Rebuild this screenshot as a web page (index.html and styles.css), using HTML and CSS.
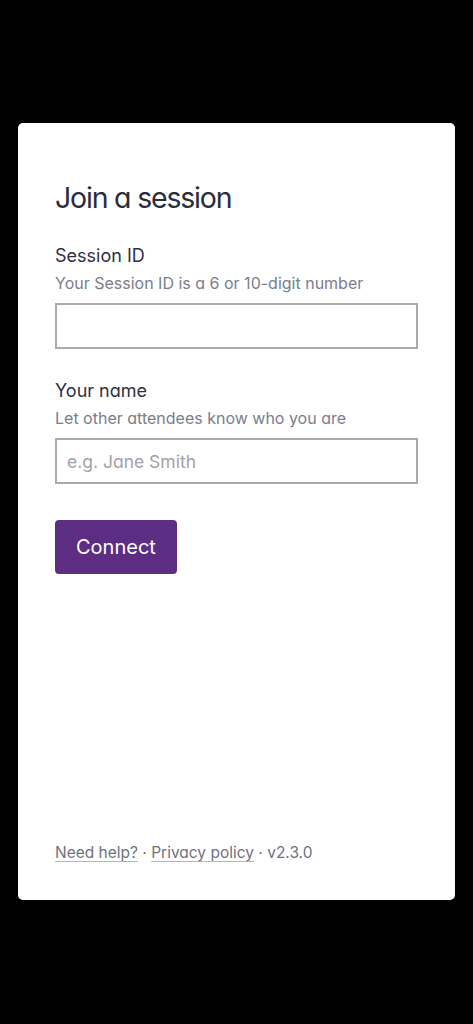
FILE: index.html
```html
<!DOCTYPE html>
<html lang="en">
<head>
<meta charset="utf-8">
<meta name="viewport" content="width=device-width, initial-scale=1">
<title>Join a session</title>
<link rel="stylesheet" href="styles.css">
</head>
<body>
<main class="card">
  <h1 class="title">Join a session</h1>
  <div class="field">
    <label class="label" for="sid">Session ID</label>
    <p class="hint">Your Session ID is a 6 or 10-digit number</p>
    <input class="input" id="sid" type="text">
  </div>
  <div class="field">
    <label class="label" for="name">Your name</label>
    <p class="hint">Let other attendees know who you are</p>
    <input class="input" id="name" type="text" placeholder="e.g. Jane Smith">
  </div>
  <button class="btn" type="button">Connect</button>
  <footer class="footer">
    <a href="#" class="link">Need help?</a> · <a href="#" class="link">Privacy policy</a> · v2.3.0
  </footer>
</main>
</body>
</html>
```

FILE: styles.css
```css
html, body {
  margin: 0;
  background: #000;
}
body {
  padding: 123px 18px 0;
  font-family: Inter, "Noto Sans", sans-serif;
  font-feature-settings: "cv11" 1;
}
.card {
  box-sizing: border-box;
  height: 777px;
  background: #fff;
  border-radius: 5px;
  padding: 57px 37px 36px;
  display: flex;
  flex-direction: column;
  align-items: flex-start;
}
.title {
  margin: 0;
  font-size: 28.5px;
  line-height: 36px;
  font-weight: 400;
  letter-spacing: -1.2px;
  color: #2b2d3b;
}
.field {
  align-self: stretch;
  display: flex;
  flex-direction: column;
  margin-top: 28px;
}
.field + .field {
  margin-top: 30px;
}
.label {
  font-size: 18px;
  line-height: 24px;
  color: #2f3140;
}
.hint {
  margin: 5px 0 10px;
  font-size: 16px;
  line-height: 20px;
  color: #7b7d8a;
}
.input {
  box-sizing: border-box;
  height: 46px;
  width: 100%;
  border: 2px solid #a9aaae;
  border-radius: 0;
  padding: 0 10px;
  font-family: inherit;
  font-feature-settings: "cv11" 1;
  font-size: 17.5px;
  color: #2b2d3b;
  background: #fff;
  outline: none;
}
.input::placeholder {
  color: #a0a2ab;
}
.btn {
  margin-top: 36px;
  height: 54px;
  padding: 0 21px;
  border: 0;
  border-radius: 4px;
  background: #5c2d82;
  color: #fff;
  font-family: inherit;
  font-feature-settings: "cv11" 1;
  font-size: 20px;
}
.footer {
  margin-top: auto;
  font-size: 15.5px;
  line-height: 22px;
  color: #6f7180;
}
.link {
  color: #6f7180;
  text-decoration: underline;
  text-decoration-color: #b5b6bd;
  text-underline-offset: 3px;
}
```
